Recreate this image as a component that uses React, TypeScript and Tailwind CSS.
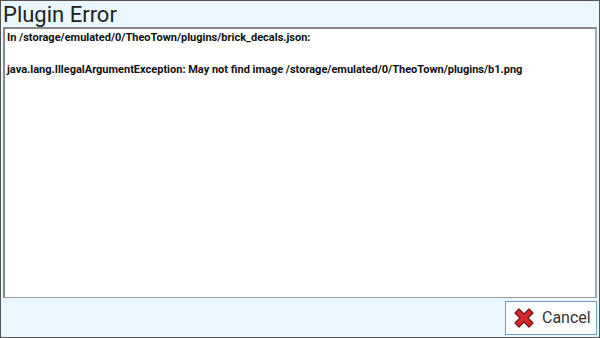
export default function App() {
  return (
    <div className="w-[600px] h-[338px] bg-[#ebf7fe] border border-[#555] flex flex-col overflow-hidden" style={{ fontFamily: 'Roboto, "Liberation Sans", sans-serif' }}>
      <div className="h-[26px] pl-[2px] text-[22px] leading-[28px] text-[#222] font-normal">Plugin Error</div>
      <div className="mx-[2px] h-[271px] bg-white border-t-2 border-l-2 border-[#888] border-r-2 border-b border-r-[#aaa] border-b-[#999] px-[2px] pt-[1px] text-[11px] leading-[16px] font-bold text-[#111]">
        <div>In /storage/emulated/0/TheoTown/plugins/brick_decals.json:</div>
        <div>&nbsp;</div>
        <div>java.lang.IllegalArgumentException: May not find image /storage/emulated/0/TheoTown/plugins/b1.png</div>
      </div>
      <div className="flex justify-end pr-[2px] pt-[3px]">
        <button className="w-[92px] h-[34px] bg-white border border-[#6b9dc2] flex items-center gap-[7px] pl-[7px] text-[16px] text-[#333]">
          <svg width="22" height="22" viewBox="0 0 22 22">
            <path d="M2 6 L6 2 L11 7 L16 2 L20 6 L15 11 L20 16 L16 20 L11 15 L6 20 L2 16 L7 11 Z" fill="#d8262b" stroke="#6b1515" strokeWidth="1.2" strokeLinejoin="round" />
          </svg>
          <span>Cancel</span>
        </button>
      </div>
    </div>
  );
}
